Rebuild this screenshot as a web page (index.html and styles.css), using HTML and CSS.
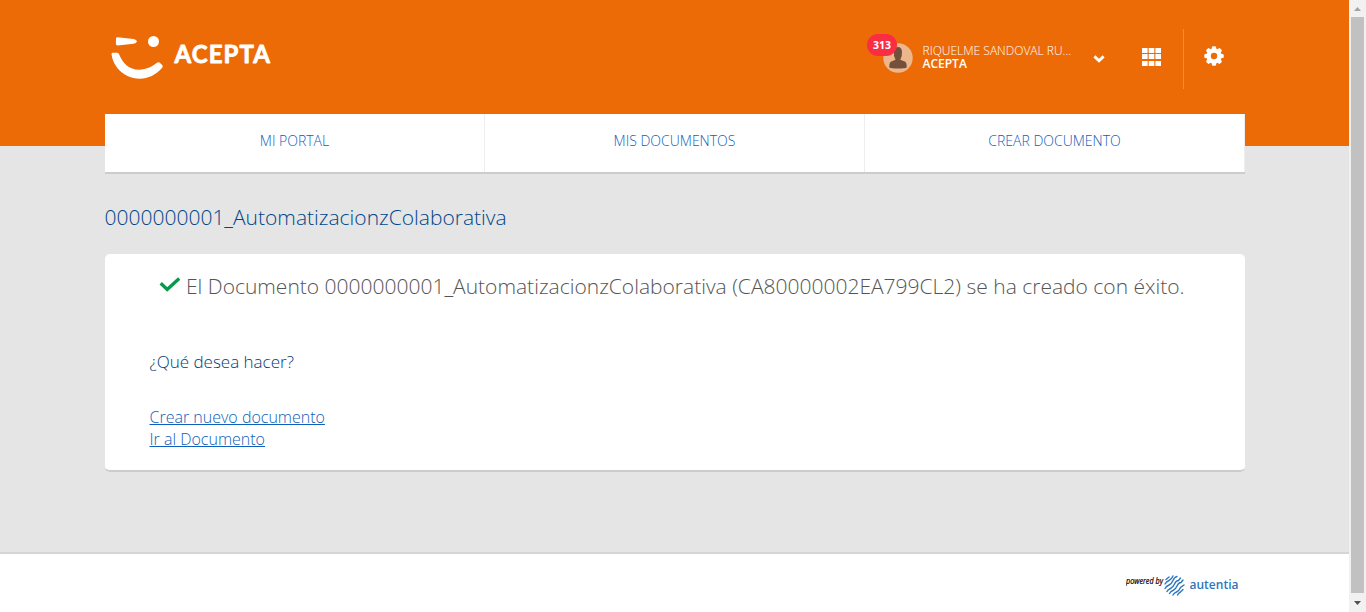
FILE: index.html
```html
<!DOCTYPE html>
<html lang="es">
<head>
<meta charset="utf-8">
<title>Acepta</title>
<link rel="stylesheet" href="styles.css">
</head>
<body>
<div class="window">
  <div class="page">
    <header class="header">
      <div class="topbar container">
        <svg class="logo" width="166" height="46" viewBox="0 0 166 46" role="img" aria-label="Acepta">
          <g fill="#fff">
            <path d="M11 4.300 Q11.200 3.200 12.500 3.200 L28.500 4.900 Q31.800 5.500 31.800 7.500 Q31.700 9.300 28.500 9.800 L12.500 11.500 Q11 11.400 10.900 10Z"/>
            <circle cx="48.500" cy="7.500" r="5.500"/>
            <path d="M6.500 20 Q6.600 18.700 8 18.700 L12.200 18.700 Q13.600 18.900 14.200 20.500 C18 29.500 24 35.600 34 35.700 C42 35.500 47.500 32.500 52 28.800 Q53.200 27.700 54.500 28.600 L57.200 31 Q58.400 32.400 57.200 33.800 C51 41 43 44.700 35 44.700 C17 44.300 7.800 31 6.500 20Z"/>
          </g>
          <text class="logo-text" x="69.500" y="28.500" textLength="95.500" lengthAdjust="spacing">ACEPTA</text>
        </svg>
        <div class="user">
          <div class="avatar">
            <svg width="30" height="30" viewBox="0 0 30 30"><circle cx="15" cy="15" r="14.700" fill="#edb78e"/><path d="M6.300 24.500 Q6 18.500 9 18.200 L12.500 16.800 Q10.500 13.500 10.800 8.500 Q11.500 4 15 4 Q18.500 4 19 8.500 Q19.300 13.500 17.300 16.800 L21 18.200 Q24 18.500 23.700 24.500 Q22 25.500 15 25.500 Q8 25.500 6.300 24.500Z" fill="#735039"/></svg>
            <span class="badge">313</span>
          </div>
          <div class="user-text"><div class="user-name">RIQUELME SANDOVAL RU...</div><div class="company">ACEPTA</div></div>
          <svg class="chevron" width="12" height="8" viewBox="0 0 12 8"><path d="M1.400 1.400 L6 5.700 L10.600 1.400" fill="none" stroke="#fff" stroke-width="2.900"/></svg>
        </div>
        <svg class="apps" width="19" height="18" viewBox="0 0 19 18" fill="#fff"><path d="M0 0h5.600v5H0z M6.700 0h5.600v5H6.700z M13.400 0H19v5h-5.600z M0 6h5.600v5H0z M6.700 6h5.600v5H6.700z M13.400 6H19v5h-5.600z M0 13h5.600v5H0z M6.700 13h5.600v5H6.700z M13.400 13H19v5h-5.600z"/></svg>
        <div class="settings">
          <svg width="20" height="20" viewBox="-10 -10 20 20"><g fill="#fff"><circle r="7.800"/><g id="teeth"><rect x="-2.100" y="-9.700" width="4.200" height="19.400" rx="1.200"/><rect x="-9.700" y="-2.100" width="19.400" height="4.200" rx="1.200"/></g><use href="#teeth" transform="rotate(45)"/></g><circle r="3.200" fill="#ed6b06"/></svg>
        </div>
      </div>
    </header>
    <nav class="nav container">
      <a class="nav-item">MI PORTAL</a>
      <a class="nav-item">MIS DOCUMENTOS</a>
      <a class="nav-item">CREAR DOCUMENTO</a>
    </nav>
    <main class="main container">
      <h1 class="title">0000000001_AutomatizacionzColaborativa</h1>
      <section class="card">
        <div class="success">
          <svg class="check" width="22" height="16" viewBox="0 0 22 16"><path d="M1.700 6.300 L8.200 12.400 L20.200 1.600" fill="none" stroke="#09984c" stroke-width="3.400"/></svg>
          <span class="message">El Documento 0000000001_AutomatizacionzColaborativa (CA80000002EA799CL2) se ha creado con éxito.</span>
        </div>
        <p class="question">¿Qué desea hacer?</p>
        <div class="links"><a class="link">Crear nuevo documento</a><a class="link">Ir al Documento</a></div>
      </section>
    </main>
    <footer class="footer">
      <div class="powered container">
        <svg width="114" height="24" viewBox="0 0 114 24">
          <text class="powered-text" x="0" y="9" textLength="37" lengthAdjust="spacingAndGlyphs">powered by</text>
          <g fill="none" stroke="#2e77bd" stroke-width="1.400" stroke-linecap="round">
            <path d="M40 4.500l3-2.500M39 9q1.500-2.500 4-3.500t4-4.500M39 13.500q1.500-2.500 4-3.500t4-4.500 4-4M41 16.500q1-2 3.500-3t4-4.500 4-3.500l2-2.500M43.500 18.500q1-2 3.500-3t4-4.500 4-3.500l2-2.500M47 20q1-2 3.500-3t4-4.500l3.500-2.500M51.500 20q1-2 3-3l2.500-2.500"/>
          </g>
          <text class="autentia" x="63.500" y="14" textLength="49" lengthAdjust="spacing">autentia</text>
        </svg>
      </div>
    </footer>
  </div>
  <div class="scrollbar">
    <svg class="arrow" width="17" height="17" viewBox="0 0 17 17"><path d="M5 11h7L8.500 7z" fill="#a3a3a3"/></svg>
    <div class="thumb"></div>
    <svg class="arrow" width="17" height="19" viewBox="0 0 17 19"><path d="M5 8h7L8.500 12z" fill="#505050"/></svg>
  </div>
</div>
</body>
</html>
```
FILE: styles.css
```css
* { box-sizing: border-box; }
body { margin: 0; font-family: "Open Sans", sans-serif; font-weight: 300; overflow: hidden; }
.window { display: flex; height: 612px; }
.page { flex: 1; display: flex; flex-direction: column; background: #e5e5e5; }
.container { width: 1140px; margin-left: 105px; }
.header { height: 146px; flex: none; background: #ed6b06; }
.topbar { display: flex; height: 114px; align-items: flex-start; }
.logo { margin: 34px 0 0; flex: none; }
.logo-text { font: 700 24px Lato, sans-serif; fill: #fff; stroke: #fff; stroke-width: .8px; stroke-linejoin: round; }
.user { display: flex; margin-left: auto; margin-top: 43px; color: #fff; }
.avatar { position: relative; width: 30px; height: 30px; }
.avatar svg { display: block; margin-left: .5px; }
.badge { position: absolute; left: -15px; top: -9px; width: 30px; height: 22px; border-radius: 11px; background: #fa2d43; font-size: 10.500px; font-weight: 700; line-height: 22px; text-align: center; }
.user-text { margin-left: 10.500px; width: 169.500px; font-size: 12px; line-height: 13px; padding-top: 1px; white-space: nowrap; }
.company { font-weight: 600; }
.chevron { margin-top: 12px; margin-left: 1px; }
.apps { margin: 48px 22px 0 37px; }
.settings { margin-top: 29px; width: 62px; height: 60px; border-left: 1px solid #f18c3d; padding: 17px 0 0 19.500px; }
.settings svg { display: block; }
.nav { display: flex; height: 60px; margin-top: -32px; flex: none; background: #fff; border-bottom: 2px solid #ccc; }
.nav-item { flex: 1; border-right: 1px solid #eee; text-align: center; font-size: 14px; line-height: 18px; padding-top: 18px; color: #0f60ba; }
.main { flex: 1; }
.title { margin: 28px 0 0 -.5px; font-size: 21px; font-weight: 300; line-height: 30px; height: 52px; color: #00468a; }
.card { height: 218px; background: #fff; border-bottom: 2px solid #ccc; border-radius: 5px; padding: 17px 44.500px 0; }
.success { display: flex; height: 30px; padding-left: 9.500px; }
.check { margin: 6px 5px 0 0; flex: none; }
.message { font-size: 21px; line-height: 30px; color: #555; white-space: nowrap; }
.question { margin: 49px 0 0; font-size: 17px; line-height: 24px; color: #003b75; }
.links { display: flex; flex-direction: column; align-items: flex-start; margin-top: 32px; }
.link { font-size: 16px; line-height: 22px; color: #0f60ba; text-decoration: underline; }
.footer { height: 60px; background: #fff; border-top: 2px solid #d5d5d5; }
.powered { display: flex; justify-content: flex-end; padding: 21px 5px 0 0; }
.powered-text { font: italic 500 8.500px "Open Sans", sans-serif; fill: #000; stroke: #000; stroke-width: .2px; }
.autentia { font: 600 12px "Open Sans", sans-serif; fill: #2e77bd; }
.scrollbar { width: 17px; background: #f1f1f1; display: flex; flex-direction: column; }
.arrow { display: block; flex: none; }
.thumb { height: 576px; width: 13px; margin-left: 2px; background: #c1c1c1; flex: none; }
```
